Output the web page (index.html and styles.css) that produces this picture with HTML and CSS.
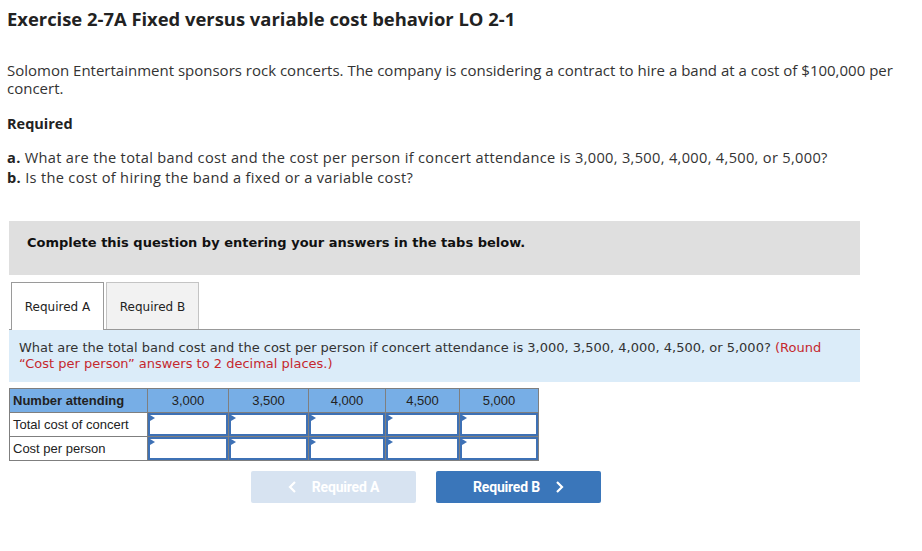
FILE: index.html
```html
<!DOCTYPE html>
<html>
<head>
<meta charset="utf-8">
<link rel="stylesheet" href="styles.css">
</head>
<body>
<div class="page">
  <h1 class="title">Exercise 2-7A Fixed versus variable cost behavior LO 2-1</h1>
  <p class="intro">Solomon Entertainment sponsors rock concerts. The company is considering a contract to hire a band at a cost of $100,000 per concert.</p>
  <p class="req-head">Required</p>
  <div class="req-list">
    <div class="req-item"><b>a.</b> What are the total band cost and the cost per person if concert attendance is 3,000, 3,500, 4,000, 4,500, or 5,000?</div>
    <div class="req-item"><b>b.</b> Is the cost of hiring the band a fixed or a variable cost?</div>
  </div>

  <div class="notice">Complete this question by entering your answers in the tabs below.</div>

  <div class="tabs">
    <div class="tab active">Required A</div>
    <div class="tab">Required B</div>
  </div>
  <div class="prompt">What are the total band cost and the cost per person if concert attendance is 3,000, 3,500, 4,000, 4,500, or 5,000? <span class="red">(Round</span><br><span class="red">“Cost per person” answers to 2 decimal places.)</span></div>

  <table class="grid">
    <colgroup>
      <col class="c0"><col class="c1"><col class="c2"><col class="c3"><col class="c4"><col class="c5">
    </colgroup>
    <tr class="head">
      <th class="label">Number attending</th><th>3,000</th><th>3,500</th><th>4,000</th><th>4,500</th><th>5,000</th>
    </tr>
    <tr>
      <td class="label">Total cost of concert</td>
      <td class="in"><div class="box"></div></td><td class="in"><div class="box"></div></td><td class="in"><div class="box"></div></td><td class="in"><div class="box"></div></td><td class="in"><div class="box"></div></td>
    </tr>
    <tr>
      <td class="label">Cost per person</td>
      <td class="in"><div class="box"></div></td><td class="in"><div class="box"></div></td><td class="in"><div class="box"></div></td><td class="in"><div class="box"></div></td><td class="in"><div class="box"></div></td>
    </tr>
  </table>

  <div class="nav">
    <div class="btn prev"><svg width="10" height="14" viewBox="0 0 10 14"><polyline points="7,2 2,7 7,12" fill="none" stroke="#fff" stroke-width="2.2"/></svg><span>Required A</span></div>
    <div class="btn next"><span>Required B</span><svg width="10" height="14" viewBox="0 0 10 14"><polyline points="3,2 8,7 3,12" fill="none" stroke="#fff" stroke-width="2.2"/></svg></div>
  </div>
</div>
</body>
</html>
```
FILE: styles.css
```css
* { box-sizing: border-box; }
body { margin: 0; background: #fff; }
.page { padding: 0 0 0 7px; width: 922px; font-family: "Open Sans", sans-serif; color: #333; }
.title { margin: 0; padding-top: 8px; font-size: 18.4px; line-height: 22px; font-weight: 700; color: #222; }
.intro { margin: 31px 0 0; width: 900px; font-size: 15px; line-height: 18px; }
.req-head { margin: 18px 0 0; font-size: 14.5px; line-height: 18px; font-weight: 700; color: #222; }
.req-list { margin: 14px 0 0; font-size: 14.6px; letter-spacing: 0.32px; line-height: 20px; }
.req-item b { color: #222; }

.notice { margin: 34px 0 0 2px; width: 851px; height: 54px; background: #dfdfdf; padding: 14px 0 0 18px; font-family: "DejaVu Sans", Verdana, sans-serif; font-weight: 700; font-size: 13px; line-height: 16px; color: #111; }

.tabs { display: flex; gap: 2px; margin: 7px 0 0 4px; height: 47px; }
.tab { width: 93px; font-family: "DejaVu Sans", Verdana, sans-serif; font-size: 12px; color: #222; display: flex; align-items: center; justify-content: center; border: 1px solid #c4c4c4; border-bottom: none; background: #f2f2f2; padding-top: 1px; }
.tab.active { background: #fff; border-color: #9a9a9a; height: 48px; position: relative; z-index: 1; }

.prompt { margin: 0 0 0 2px; width: 851px; height: 53px; background: #dbecf9; border-top: 1px solid #999; padding: 10px 0 0 10px; font-family: "DejaVu Sans", Verdana, sans-serif; font-size: 13px; line-height: 16px; color: #333; }
.red { color: #c5282e; }

.grid { margin: 6px 0 0 2px; border-collapse: collapse; font-family: "Liberation Sans", Arial, sans-serif; font-size: 13px; color: #222; }
.c0 { width: 138px; } .c1 { width: 81px; } .c2 { width: 80px; } .c3 { width: 77px; } .c4 { width: 74px; } .c5 { width: 79px; }
.grid th, .grid td { border: 1px solid #7f7f7f; padding: 0; height: 24px; }
.grid tr.head th { background: #77aee6; font-weight: 400; text-align: center; }
.grid tr.head th.label { font-weight: 700; text-align: left; padding-left: 3px; }
.grid td.label { padding-left: 3px; }
.grid td.in { padding: 0; }
.box { position: relative; height: 23px; border: 2px solid #3e71b5; background: #fff; }
.box::before { content: ""; position: absolute; left: 0; top: 0; border-left: 5px solid #3e71b5; border-top: 3px solid transparent; border-bottom: 3px solid transparent; }

.nav { display: flex; gap: 20px; margin: 10px 0 0 244px; }
.btn { width: 165px; height: 32px; border-radius: 2px; display: flex; align-items: center; justify-content: center; gap: 14px; font-family: Roboto, "Liberation Sans", sans-serif; font-weight: 700; font-size: 14px; color: #fff; letter-spacing: -0.2px; }
.btn.prev { background: #d7e3f1; }
.btn.next { background: #3a76ba; }
```
